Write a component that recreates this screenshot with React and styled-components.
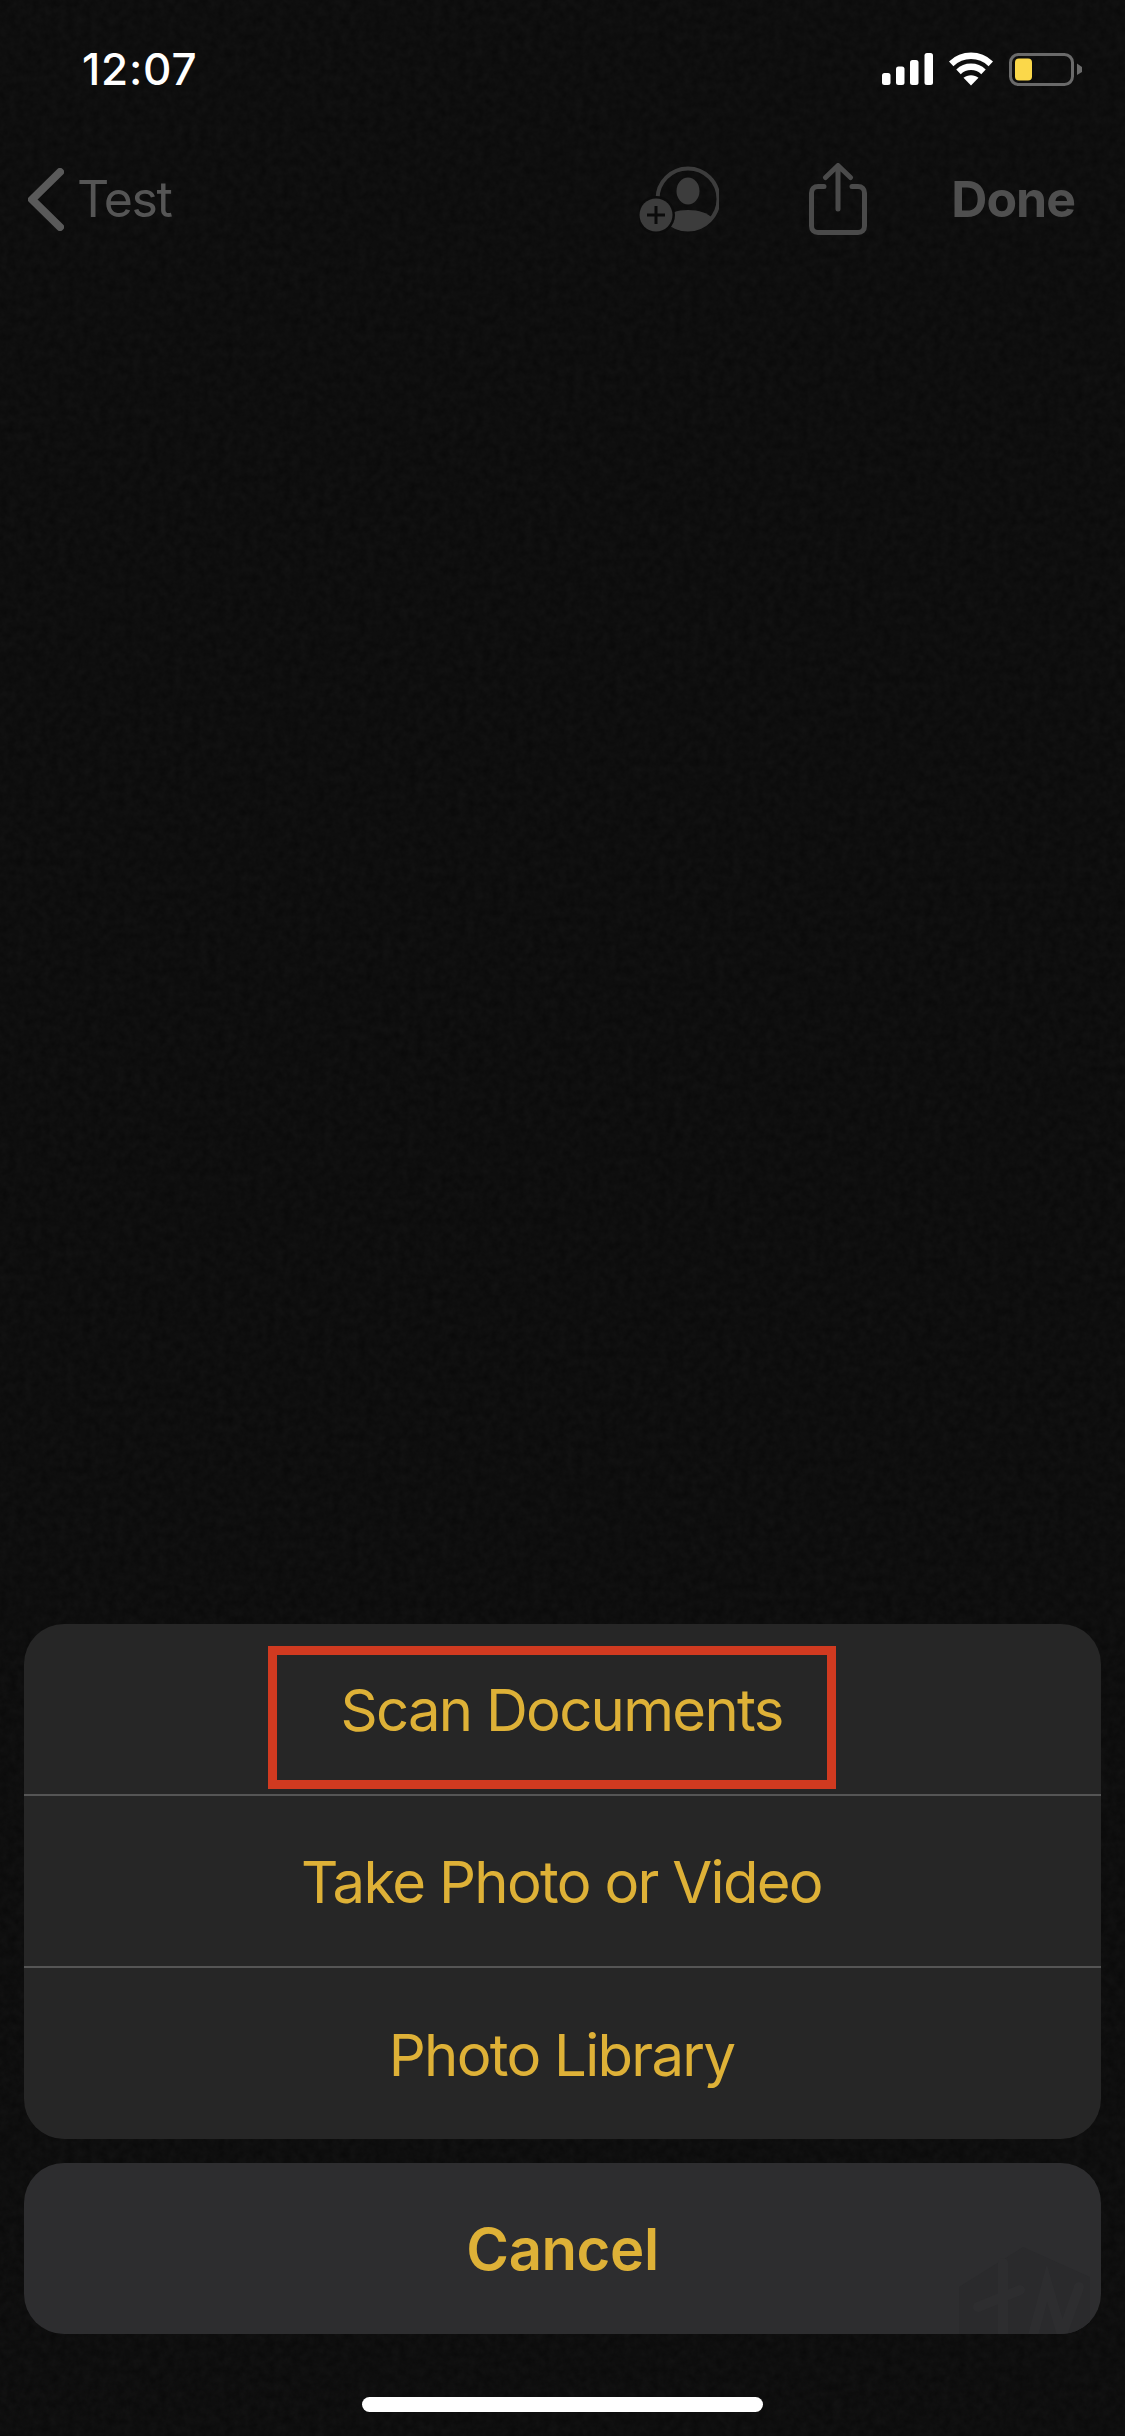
import styled, { createGlobalStyle } from "styled-components";

const GlobalStyle = createGlobalStyle`
  html, body {
    margin: 0;
    padding: 0;
    background: #090909;
  }
  * {
    box-sizing: border-box;
  }
`;

const Page = styled.div`
  position: relative;
  isolation: isolate;
  width: 1125px;
  height: 2436px;
  display: flex;
  flex-direction: column;
  overflow: hidden;
  background: #090909;
  font-family: Inter, "Liberation Sans", sans-serif;
`;

const Grain = styled.svg`
  position: absolute;
  inset: 0;
  z-index: -1;
  width: 100%;
  height: 100%;
  pointer-events: none;
`;

const StatusBar = styled.div`
  display: flex;
  align-items: center;
  justify-content: space-between;
  height: 34px;
  margin-top: 52px;
  padding: 0 43px 0 82px;
`;

const Clock = styled.span`
  color: #fff;
  font-size: 44px;
  font-weight: 500;
  letter-spacing: 0.8px;
  line-height: 34px;
`;

const StatusIcons = styled.div`
  display: flex;
  align-items: center;
  gap: 16px;
`;

const NavBar = styled.div`
  display: flex;
  align-items: center;
  height: 72px;
  margin-top: 77px;
  padding: 0 50px 0 28px;
`;

const BackLink = styled.div`
  display: flex;
  align-items: center;
  gap: 13px;
  margin-right: auto;
`;

const NavText = styled.span`
  color: ${(p) => (p.$strong ? "#4f4f4f" : "#555")};
  font-size: 50px;
  font-weight: ${(p) => (p.$strong ? 700 : 400)};
  letter-spacing: ${(p) => (p.$strong ? "-1px" : "-1.5px")};
  line-height: 72px;
`;

const NavIcons = styled.div`
  display: flex;
  align-items: center;
  gap: 90px;
  margin-right: 84px;
`;

const Sheet = styled.div`
  position: relative;
  display: flex;
  flex-direction: column;
  gap: 24px;
  margin-top: auto;
  padding: 0 24px;
`;

const ActionGroup = styled.div`
  display: flex;
  flex-direction: column;
  border-radius: 40px;
  overflow: hidden;
  background: #262626;
`;

const ActionRow = styled.div`
  position: relative;
  display: flex;
  align-items: center;
  justify-content: center;
  height: ${(p) => p.$height}px;
  padding: 2px 2px 0 0;
  color: #deb137;
  font-size: 58px;
  font-weight: 400;
  letter-spacing: -1.7px;
  border-bottom: ${(p) => (p.$divided ? "2px solid #555" : "none")};
`;

const CancelButton = styled.div`
  position: relative;
  display: flex;
  align-items: center;
  justify-content: center;
  height: 171px;
  border-radius: 40px;
  overflow: hidden;
  background: #2d2d2f;
  color: #deb137;
  font-size: 58px;
  font-weight: 600;
  letter-spacing: -0.4px;
`;

const Watermark = styled.svg`
  position: absolute;
  right: -8px;
  top: 84px;
  width: 150px;
  height: 100px;
`;

const Highlight = styled.div`
  position: absolute;
  left: 268px;
  top: 22px;
  width: 568px;
  height: 143px;
  border: 9px solid #d13a20;
`;

const HomeIndicator = styled.div`
  align-self: center;
  width: 401px;
  height: 15px;
  margin: 63px 0 24px;
  border-radius: 8px;
  background: #fff;
`;

const SignalIcon = () => (
  <svg width="51" height="32" viewBox="0 0 51 32" fill="#fff">
    <rect x="0" y="20" width="8.500" height="12" rx="2.500" />
    <rect x="14" y="13.500" width="8.500" height="18.500" rx="2.500" />
    <rect x="28" y="7" width="8.500" height="25" rx="2.500" />
    <rect x="42.500" y="0" width="8.500" height="32" rx="2.500" />
  </svg>
);

const WifiIcon = () => (
  <svg width="44" height="34" viewBox="0 0 44 34" fill="none" stroke="#fff" strokeWidth="6.500">
    <path d="M2.200 11.800C13.500 1.200 30.500 1.200 41.800 11.800" />
    <path d="M9.500 19.800C16.500 13.200 27.500 13.200 34.500 19.800" />
    <path d="M22 33.500L14.500 25.800C18.500 22.300 25.500 22.300 29.500 25.800Z" fill="#fff" stroke="none" />
  </svg>
);

const BatteryIcon = () => (
  <svg width="73" height="33" viewBox="0 0 73 33">
    <rect x="1.500" y="1.500" width="62" height="30" rx="8" fill="none" stroke="#6a6a6a" strokeWidth="3" />
    <rect x="6" y="5.500" width="17" height="22" rx="4" fill="#fbd84a" />
    <path d="M68 10.500L73 14V19L68 22Z" fill="#6a6a6a" />
  </svg>
);

const ChevronIcon = () => (
  <svg width="36" height="63" viewBox="0 0 36 63" fill="none" stroke="#5a5a5a" strokeWidth="8" strokeLinecap="round" strokeLinejoin="round">
    <path d="M32 4L4 31.500L32 59" />
  </svg>
);

const AddPersonIcon = () => (
  <svg width="80" height="67" viewBox="0 0 80 67">
    <circle cx="49" cy="33" r="30.500" fill="none" stroke="#3c3c3c" strokeWidth="4" />
    <ellipse cx="49" cy="25" rx="11.500" ry="13.500" fill="#3c3c3c" />
    <path d="M26 54C29 47 38 44 49 44C60 44 69 47 73 52C67 60 59 65 49 65C39 65 31 61 26 54Z" fill="#3c3c3c" />
    <circle cx="17" cy="49" r="19" fill="#0b0b0b" />
    <circle cx="17" cy="49" r="16.500" fill="#3c3c3c" />
    <path d="M17 40V58M8 49H26" stroke="#0b0b0b" strokeWidth="3" />
  </svg>
);

const ShareIcon = () => (
  <svg width="58" height="72" viewBox="0 0 58 72" fill="none" stroke="#4a4a4a" strokeWidth="5" strokeLinecap="round" strokeLinejoin="round">
    <path d="M15 23.500H9C5 23.500 2.500 26 2.500 30V63C2.500 67 5 69.500 9 69.500H49C53 69.500 55.500 67 55.500 63V30C55.500 26 53 23.500 49 23.500H43" />
    <path d="M29 46V3M16.500 14.500L29 2.500L41.500 14.500" />
  </svg>
);

const WatermarkLogo = () => (
  <Watermark viewBox="0 0 150 100">
    <path d="M0 40L64 0L131 30V100H0Z" fill="#2a2a2c" />
    <path d="M19 60L61 43M44 16V100M71 100L88 36L103 88L120 40" fill="none" stroke="#2d2d2f" strokeWidth="10" strokeLinecap="round" />
  </Watermark>
);

const App = () => (
  <>
    <GlobalStyle />
    <Page>
      <Grain>
        <filter id="paper">
          <feTurbulence type="fractalNoise" baseFrequency="0.12" numOctaves="3" seed="4" />
          <feColorMatrix values="0 0 0 0 1  0 0 0 0 1  0 0 0 0 1  0 0 0 0.04 0" />
        </filter>
        <rect width="100%" height="100%" filter="url(#paper)" />
      </Grain>

      <StatusBar>
        <Clock>12:07</Clock>
        <StatusIcons>
          <SignalIcon />
          <WifiIcon />
          <BatteryIcon />
        </StatusIcons>
      </StatusBar>

      <NavBar>
        <BackLink>
          <ChevronIcon />
          <NavText>Test</NavText>
        </BackLink>
        <NavIcons>
          <AddPersonIcon />
          <ShareIcon />
        </NavIcons>
        <NavText $strong>Done</NavText>
      </NavBar>

      <Sheet>
        <ActionGroup>
          <ActionRow $height={172} $divided>Scan Documents</ActionRow>
          <ActionRow $height={172} $divided>Take Photo or Video</ActionRow>
          <ActionRow $height={171}>Photo Library</ActionRow>
        </ActionGroup>
        <CancelButton>
          Cancel
          <WatermarkLogo />
        </CancelButton>
        <Highlight />
      </Sheet>

      <HomeIndicator />
    </Page>
  </>
);

export default App;
